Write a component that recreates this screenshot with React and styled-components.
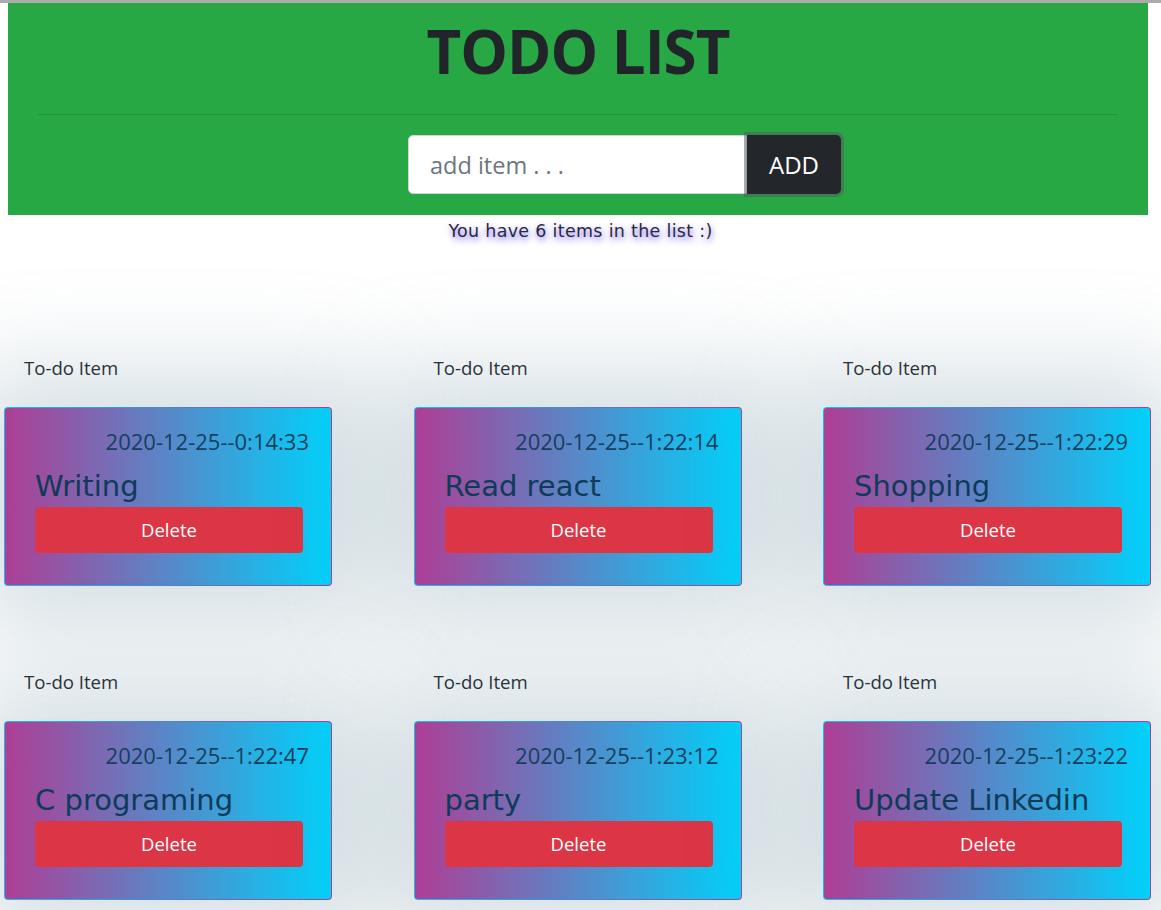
import React from 'react';
import styled, { createGlobalStyle } from 'styled-components';

const GlobalStyle = createGlobalStyle`
  body {
    margin: 0;
    background: #ffffff;
    font-family: "Open Sans", "Noto Sans", sans-serif;
    color: #212529;
    overflow-x: hidden;
  }
`;

const comic = `"Comic Sans MS", "DejaVu Sans", sans-serif`;

const items = [
  { id: 1, date: '2020-12-25--0:14:33', text: 'Writing' },
  { id: 2, date: '2020-12-25--1:22:14', text: 'Read react' },
  { id: 3, date: '2020-12-25--1:22:29', text: 'Shopping' },
  { id: 4, date: '2020-12-25--1:22:47', text: 'C programing' },
  { id: 5, date: '2020-12-25--1:23:12', text: 'party' },
  { id: 6, date: '2020-12-25--1:23:22', text: 'Update Linkedin' },
];

const App = () => {
  return (
    <>
      <GlobalStyle />
      <TopLine />
      <Header>
        <Title>TODO LIST</Title>
        <Divider />
        <AddForm onSubmit={(e) => e.preventDefault()}>
          <ItemInput placeholder="add item . . ." />
          <AddButton type="submit">ADD</AddButton>
        </AddForm>
      </Header>
      <Count>You have {items.length} items in the list :)</Count>
      <List>
        {items.map((item) => (
          <Item key={item.id}>
            <Label>To-do Item</Label>
            <Card>
              <DateText>{item.date}</DateText>
              <ItemTitle>{item.text}</ItemTitle>
              <DeleteButton>Delete</DeleteButton>
            </Card>
          </Item>
        ))}
      </List>
    </>
  );
};

const TopLine = styled.div`
  height: 3px;
  background: #ababab;
`;

const Header = styled.header`
  width: 1140px;
  margin-left: 8px;
  box-sizing: border-box;
  background: #28a745;
  padding: 12px 30px 21px;
  display: flex;
  flex-direction: column;
  align-items: center;
`;

const Title = styled.h1`
  margin: 0;
  font-size: 60px;
  line-height: 72px;
  font-weight: 700;
  letter-spacing: -1px;
  color: #212529;
`;

const Divider = styled.hr`
  align-self: stretch;
  margin: 27px 0 20px;
  border: 0;
  border-top: 1px solid rgba(0, 0, 0, 0.1);
`;

const AddForm = styled.form`
  display: flex;
  height: 59px;
  margin-left: 93px;
`;

const ItemInput = styled.input`
  width: 339px;
  box-sizing: border-box;
  border: 1px solid #ced4da;
  border-radius: 5px 0 0 5px;
  padding: 0 21px;
  font-family: "Open Sans", sans-serif;
  font-size: 23.5px;
  color: #495057;
  outline: none;
  &::placeholder {
    color: #6c757d;
  }
`;

const AddButton = styled.button`
  width: 94px;
  border: 0;
  border-radius: 0 5px 5px 0;
  background: #23272b;
  color: #ffffff;
  font-family: "Open Sans", sans-serif;
  font-size: 24px;
  box-shadow: 0 0 0 3px rgba(82, 88, 93, 0.5);
  cursor: pointer;
`;

const Count = styled.div`
  margin-top: 3px;
  text-align: center;
  font-family: ${comic};
  font-size: 17.5px;
  letter-spacing: 0.3px;
  line-height: 27px;
  color: #2a2a3a;
  text-shadow: 1px 3px 6px rgba(80, 50, 255, 0.8);
`;

const List = styled.div`
  display: grid;
  grid-template-columns: repeat(3, 328px);
  column-gap: 81.5px;
  row-gap: 82.5px;
  padding: 109px 0 40px 4px;
`;

const Item = styled.div`
  display: flex;
  flex-direction: column;
`;

const Label = styled.div`
  padding-left: 20px;
  font-size: 18.6px;
  line-height: 27px;
  margin-bottom: 25.5px;
  color: #212529;
`;

const Card = styled.div`
  height: 179px;
  box-sizing: border-box;
  border: 1px solid transparent;
  border-radius: 4px;
  background:
    linear-gradient(to right, #ae3e95, #00d2fb) padding-box,
    linear-gradient(to right, #10c2ef, #4d86c8 50%, #ae3e95) border-box;
  box-shadow: 0 0 100px 35px rgba(110, 145, 162, 0.3);
  padding: 18px 22px 0 30px;
  display: flex;
  flex-direction: column;
`;

const DateText = styled.div`
  text-align: right;
  font-size: 22px;
  line-height: 30px;
  color: #163f5e;
`;

const ItemTitle = styled.div`
  margin-top: 12px;
  font-family: ${comic};
  font-size: 29px;
  line-height: 36px;
  color: #0d3b58;
  white-space: nowrap;
`;

const DeleteButton = styled.button`
  width: 268px;
  height: 46px;
  margin-top: 3px;
  border: 0;
  border-radius: 4px;
  background: #dc3545;
  color: #ffffff;
  font-family: "Open Sans", sans-serif;
  font-size: 18.5px;
  cursor: pointer;
`;

export default App;
